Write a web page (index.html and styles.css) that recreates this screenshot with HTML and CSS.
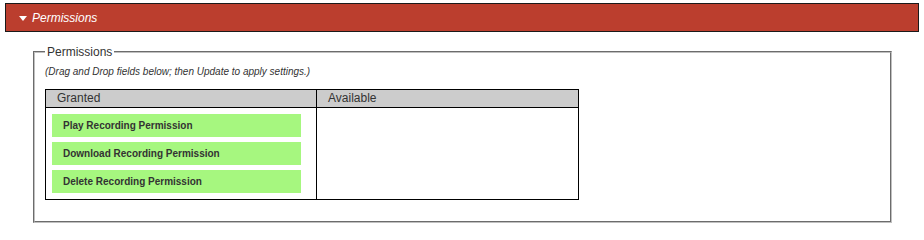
FILE: index.html
```html
<!DOCTYPE html>
<html>
<head>
<meta charset="utf-8">
<link rel="stylesheet" href="styles.css">
</head>
<body>
<div class="page">
  <div class="section-bar">
    <span class="caret"></span>
    <span class="section-title">Permissions</span>
  </div>
  <fieldset class="perm-set">
    <legend class="perm-legend">Permissions</legend>
    <div class="hint">(Drag and Drop fields below; then Update to apply settings.)</div>
    <div class="perm-table">
      <div class="th th-first">Granted</div>
      <div class="th">Available</div>
      <div class="col col-first">
        <div class="item">Play Recording Permission</div>
        <div class="item">Download Recording Permission</div>
        <div class="item">Delete Recording Permission</div>
      </div>
      <div class="col"></div>
    </div>
  </fieldset>
</div>
</body>
</html>
```

FILE: styles.css
```css
html, body {
  margin: 0;
  padding: 0;
  background: #fff;
}
body {
  font-family: "Liberation Sans", Arial, sans-serif;
  color: #333;
}
.page {
  padding: 3px 5px 0 5px;
}
.section-bar {
  display: flex;
  align-items: center;
  height: 29px;
  box-sizing: border-box;
  border: 1px solid #1a1a1a;
  background: #bb3e2e;
  padding-left: 13px;
}
.caret {
  width: 0;
  height: 0;
  border-left: 4px solid transparent;
  border-right: 4px solid transparent;
  border-top: 5px solid #fff;
  margin-right: 5px;
  margin-top: 1px;
}
.section-title {
  color: #fff;
  font-style: italic;
  font-size: 12px;
}
.perm-set {
  margin: 13px 27px 0 28px;
  padding: 0 10px 21px 10px;
  border: 2px groove #c0c0c0;
}
.perm-legend {
  font-size: 12px;
  padding: 0 2px;
  color: #333;
}
.hint {
  font-size: 10px;
  font-style: italic;
  margin-top: 7px;
  line-height: 12px;
}
.perm-table {
  margin-top: 11px;
  width: 534px;
  box-sizing: border-box;
  border: 1px solid #000;
  display: grid;
  grid-template-columns: 271px 1fr;
}
.th {
  background: #ccc;
  font-size: 12px;
  line-height: 17px;
  height: 17px;
  padding-left: 11px;
  border-bottom: 1px solid #000;
}
.th-first, .col-first {
  border-right: 1px solid #000;
}
.col {
  display: flex;
  flex-direction: column;
  gap: 5px;
  padding: 6px 0 6px 6px;
}
.item {
  width: 249px;
  height: 23px;
  box-sizing: border-box;
  background: #a6f77f;
  font-size: 10px;
  font-weight: bold;
  line-height: 23px;
  padding-left: 11px;
}
```
